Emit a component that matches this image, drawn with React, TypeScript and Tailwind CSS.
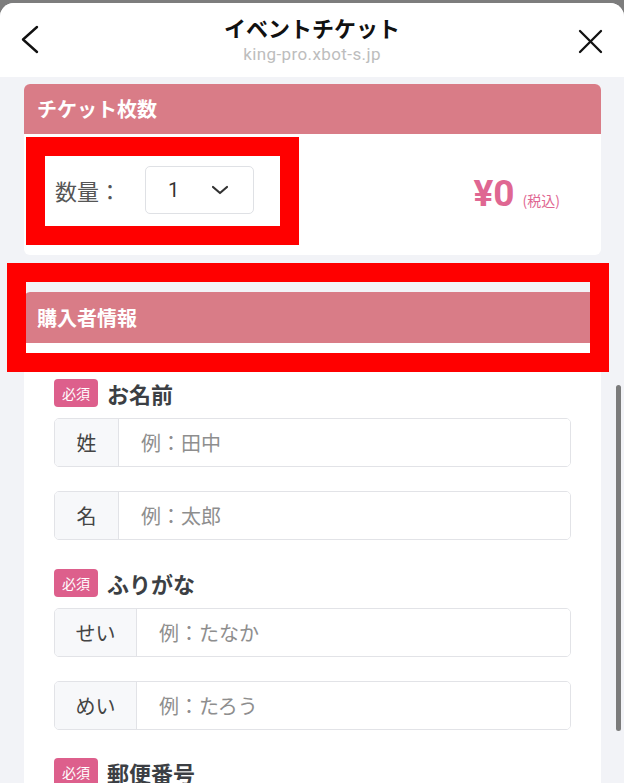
import React from "react";

function Field({
  label,
  children,
}: {
  label: string;
  children: React.ReactNode;
}) {
  return (
    <div>
      <div className="flex items-center h-[28px]">
        <span className="flex items-center justify-center w-[44px] h-[28px] rounded-[4px] bg-[#dd5f8c] text-white text-[14px] leading-none">
          必須
        </span>
        <span className="ml-[9px] text-[22px] font-bold leading-none text-[#3c3f44]">
          {label}
        </span>
      </div>
      {children}
    </div>
  );
}

function InputRow({
  label,
  labelW,
  placeholder,
  className,
}: {
  label: string;
  labelW: string;
  placeholder: string;
  className: string;
}) {
  return (
    <div
      className={
        "flex h-[49px] rounded-[5px] border border-[#e2e3e7] overflow-hidden " +
        className
      }
    >
      <div
        className={
          "flex items-center justify-center bg-[#f7f8fa] border-r border-[#e2e3e7] text-[20px] text-[#444] " +
          labelW
        }
      >
        {label}
      </div>
      <div className="flex-1 flex items-center pl-[22px] text-[20px] text-[#8e8e8e] bg-white">
        {placeholder}
      </div>
    </div>
  );
}

export default function App() {
  return (
    <div className="relative w-[624px] h-[783px] overflow-hidden bg-[#7d7d7d] font-['Noto_Sans_CJK_JP','Noto_Sans',sans-serif]">
      <div className="mt-[3px] h-[780px] rounded-t-[14px] bg-[#f2f3f7] overflow-hidden flex flex-col">
        {/* header */}
        <header className="h-[74px] shrink-0 bg-white grid grid-cols-[60px_1fr_60px]">
          <div className="pl-[20px] pt-[22px]">
            <svg width="20" height="30" viewBox="0 0 20 30" fill="none">
              <polyline
                points="17,2 3,14.5 17,27"
                stroke="#111"
                strokeWidth="2.4"
                strokeLinecap="round"
                strokeLinejoin="round"
              />
            </svg>
          </div>
          <div className="flex flex-col items-center pt-[10px]">
            <div className="text-[22px] font-bold leading-[28px] text-[#111]">
              イベントチケット
            </div>
            <div className="mt-[2px] text-[17px] leading-[22px] tracking-[0.4px] text-[#bdbdbd] font-['Roboto','Noto_Sans',sans-serif]">
              king-pro.xbot-s.jp
            </div>
          </div>
          <div className="flex justify-end pr-[21px] pt-[25px]">
            <svg width="26" height="26" viewBox="0 0 26 26" fill="none">
              <line x1="3" y1="3" x2="24" y2="24" stroke="#111" strokeWidth="2.3" strokeLinecap="round" />
              <line x1="24" y1="3" x2="3" y2="24" stroke="#111" strokeWidth="2.3" strokeLinecap="round" />
            </svg>
          </div>
        </header>

        <main className="flex-1 pl-[24px] pr-[23px] pt-[7px]">
          {/* card 1 */}
          <section className="rounded-[6px] bg-white overflow-hidden">
            <div className="h-[50px] bg-[#d97c87] flex items-center pl-[13px] text-white text-[20px] font-bold">
              チケット枚数
            </div>
            <div className="h-[121px] flex justify-between items-start pt-[32px] pl-[31px] pr-[41px]">
              <div className="flex items-center h-[48px]">
                <span className="text-[22px] text-[#555]">数量：</span>
                <div className="ml-[24px] w-[109px] h-[48px] rounded-[5px] border border-[#dfe1e5] flex items-center justify-between pl-[22px] pr-[24px]">
                  <span className="text-[20px] text-[#333] font-['Roboto',sans-serif]">1</span>
                  <svg width="18" height="10" viewBox="0 0 18 10" fill="none">
                    <polyline
                      points="2,2 9,8 16,2"
                      stroke="#333"
                      strokeWidth="2.2"
                      strokeLinecap="round"
                      strokeLinejoin="round"
                    />
                  </svg>
                </div>
              </div>
              <div className="flex items-baseline pt-[10px]">
                <span className="text-[37px] leading-[36px] font-bold text-[#df6792] font-['Roboto','Noto_Sans',sans-serif]">
                  ¥0
                </span>
                <span className="ml-[8px] text-[14px] text-[#df6792]">(税込)</span>
              </div>
            </div>
          </section>

          {/* card 2 */}
          <section className="mt-[37px] rounded-t-[6px] bg-white overflow-hidden h-[600px]">
            <div className="h-[51px] bg-[#d97c87] flex items-center pl-[13px] text-white text-[20px] font-bold">
              購入者情報
            </div>
            <div className="pt-[36px] px-[30px]">
              <Field label="お名前">
                <InputRow label="姓" labelW="w-[64px]" placeholder="例：田中" className="mt-[11px]" />
                <InputRow label="名" labelW="w-[64px]" placeholder="例：太郎" className="mt-[24px]" />
              </Field>
              <div className="mt-[29px]">
                <Field label="ふりがな">
                  <InputRow label="せい" labelW="w-[82px]" placeholder="例：たなか" className="mt-[11px]" />
                  <InputRow label="めい" labelW="w-[82px]" placeholder="例：たろう" className="mt-[24px]" />
                </Field>
              </div>
              <div className="mt-[28px]">
                <Field label="郵便番号">
                  <div />
                </Field>
              </div>
            </div>
          </section>
        </main>
      </div>

      {/* scrollbar */}
      <div className="absolute left-[616px] top-[385px] w-[5px] h-[346px] rounded-full bg-[#7b7b7b]" />

      {/* red annotation boxes */}
      <div className="absolute left-[26px] top-[137px] w-[273px] h-[108px] border-[19px] border-[#ff0000]" />
      <div className="absolute left-[7px] top-[263px] w-[602px] h-[109px] border-[19px] border-[#ff0000]" />
    </div>
  );
}
